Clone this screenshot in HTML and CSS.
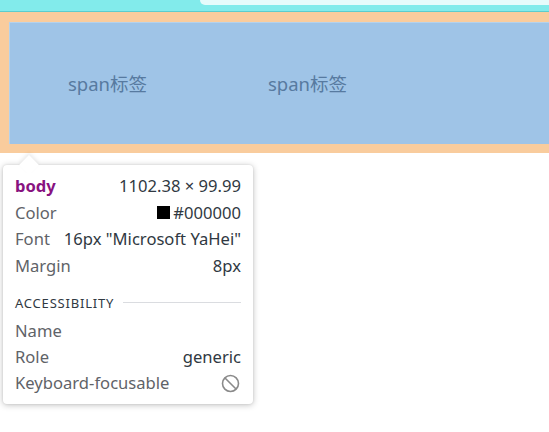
FILE: index.html
```html
<!DOCTYPE html>
<html lang="zh">
<head>
<meta charset="utf-8">
<link rel="stylesheet" href="styles.css">
</head>
<body>
<div class="topbar"><div class="tab"></div></div>
<div class="margin-box">
  <div class="content-box">
    <span class="lbl">span标签</span>
    <span class="lbl">span标签</span>
  </div>
</div>
<div class="tooltip">
  <div class="arrow"></div>
  <div class="row"><span class="tag">body</span><span class="val">1102.38 × 99.99</span></div>
  <div class="row"><span class="key">Color</span><span class="val"><i class="swatch"></i>#000000</span></div>
  <div class="row"><span class="key">Font</span><span class="val">16px "Microsoft YaHei"</span></div>
  <div class="row"><span class="key">Margin</span><span class="val">8px</span></div>
  <div class="section"><span class="sec-title">ACCESSIBILITY</span><span class="rule"></span></div>
  <div class="row tight"><span class="key">Name</span><span class="val"></span></div>
  <div class="row tight"><span class="key">Role</span><span class="val">generic</span></div>
  <div class="row tight"><span class="key">Keyboard-focusable</span><span class="val">
    <svg class="no" width="19" height="19" viewBox="0 0 19 19"><circle cx="9.5" cy="9.5" r="8" fill="none" stroke="#8a8a8a" stroke-width="1.6"/><line x1="4" y1="4" x2="15" y2="15" stroke="#8a8a8a" stroke-width="1.6"/></svg>
  </span></div>
</div>
</body>
</html>
```
FILE: styles.css
```css
html, body { margin: 0; padding: 0; }
body {
  width: 549px;
  height: 432px;
  background: #fff;
  position: relative;
  overflow: hidden;
  font-family: "Noto Sans", "Open Sans", sans-serif;
}
.topbar {
  height: 11px;
  background: #82ebeb;
  border-bottom: 1px solid #5ccccc;
  position: relative;
}
.tab {
  margin-left: 200px;
  height: 5px;
  background: #e6fbfb;
  border-bottom-left-radius: 10px;
}
.margin-box {
  background: #f9cc9d;
  padding: 10px 0 9px 9px;
}
.content-box {
  background: #9fc4e7;
  height: 122px;
  display: flex;
  align-items: center;
  padding-left: 59px;
  box-shadow: inset 1px 1px 0 #b5d2ec;
}
.lbl {
  font-family: "Noto Sans", "Noto Sans CJK SC", sans-serif;
  font-size: 18.5px;
  color: #577aa0;
  width: 200px;
}
.tooltip {
  position: absolute;
  left: 3px;
  top: 165px;
  width: 250px;
  height: 239px;
  background: #fff;
  border-radius: 4px;
  box-shadow: 0 1px 6px rgba(0,0,0,0.25), 0 0 2px rgba(0,0,0,0.1);
  box-sizing: border-box;
  padding: 8px 12px 0 12px;
  font-size: 16.6px;
  color: #303942;
}
.arrow {
  position: absolute;
  left: 19px;
  top: -7px;
  width: 14px;
  height: 14px;
  background: #fff;
  transform: rotate(45deg);
  box-shadow: -2px -2px 4px rgba(0,0,0,0.08);
}
.row {
  position: relative;
  display: flex;
  justify-content: space-between;
  align-items: center;
  height: 26.5px;
  line-height: 20px;
}
.row.tight { height: 26px; }
.tag { color: #881280; font-weight: 700; }
.key { color: #5f6368; }
.val { color: #303942; display: flex; align-items: center; }
.swatch {
  display: inline-block;
  width: 13px;
  height: 13px;
  background: #000;
  margin-right: 3px;
}
.section {
  display: flex;
  align-items: center;
  height: 39px;
  padding-top: 8px;
  box-sizing: border-box;
}
.sec-title {
  font-size: 13px;
  letter-spacing: 0.8px;
  color: #303942;
}
.rule {
  flex: 1;
  height: 1px;
  background: #dadce0;
  margin-left: 9px;
}
.no { margin-right: 1px; }
```
